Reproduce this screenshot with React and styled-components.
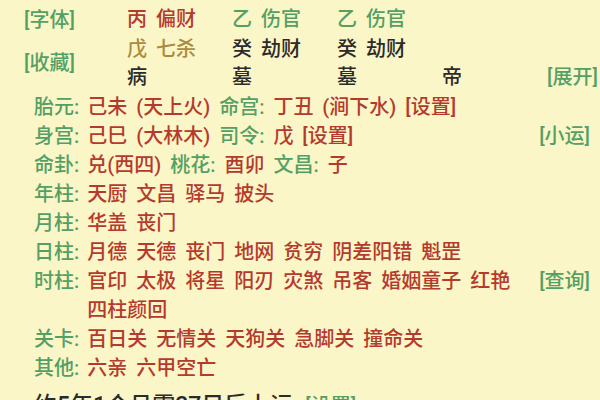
import React from 'react'
import styled, { createGlobalStyle } from 'styled-components';

const GlobalStyle = createGlobalStyle`
    html, body {
        margin: 0;
        padding: 0;
        background: #faf6c7;
    }
    body {
        font-family: Roboto, "Noto Sans CJK SC", sans-serif;
        font-size: 20px;
        font-weight: 500;
        word-spacing: 4px;
    }
`;

const colors = {
    green: '#54a064',
    red: '#b53a2e',
    gold: '#ad8a3c',
    black: '#2b2b2b',
};

const pillars = [
    { stem: ['丙', '偏财', 'red'], branch: ['戊', '七杀', 'gold'], stage: '病' },
    { stem: ['乙', '伤官', 'green'], branch: ['癸', '劫财', 'black'], stage: '墓' },
    { stem: ['乙', '伤官', 'green'], branch: ['癸', '劫财', 'black'], stage: '墓' },
    { stem: null, branch: null, stage: '帝' },
];

function Terms({ items }) {
    return (
        <Values>
            {items.map((t, i) => (
                <React.Fragment key={i}>
                    <Term>{t}</Term>{i < items.length - 1 && ' '}
                </React.Fragment>
            ))}
        </Values>
    );
}

function App() {
    return (
        <Page>
            <GlobalStyle />
            <TopGrid>
                <Tag style={{ gridColumn: 1, gridRow: 1 }}>[字体]</Tag>
                <Tag style={{ gridColumn: 1, gridRow: '2 / 4' }}>[收藏]</Tag>
                {pillars.map((p, i) => (
                    <React.Fragment key={i}>
                        <Cell style={{ gridColumn: i + 2, gridRow: 1 }} tone={p.stem ? p.stem[2] : 'black'}>
                            {p.stem && `${p.stem[0]} ${p.stem[1]}`}
                        </Cell>
                        <Cell style={{ gridColumn: i + 2, gridRow: 2 }} tone={p.branch ? p.branch[2] : 'black'}>
                            {p.branch && `${p.branch[0]} ${p.branch[1]}`}
                        </Cell>
                        <Cell style={{ gridColumn: i + 2, gridRow: 3 }} tone="black">{p.stage}</Cell>
                    </React.Fragment>
                ))}
                <SideTag style={{ gridColumn: 6, gridRow: 3 }}>[展开]</SideTag>
            </TopGrid>

            <Details>
                <Row>
                    <Label>胎元:</Label>
                    <Values>
                        己未 (天上火) <Inline>命宫:</Inline> 丁丑 (涧下水) [设置]
                    </Values>
                </Row>
                <Row>
                    <Label>身宫:</Label>
                    <Values>
                        己巳 (大林木) <Inline>司令:</Inline> 戊 [设置]
                    </Values>
                    <SideTag>[小运]</SideTag>
                </Row>
                <Row>
                    <Label>命卦:</Label>
                    <Values>
                        兑(西四) <Inline>桃花:</Inline> 酉卯 <Inline>文昌:</Inline> 子
                    </Values>
                </Row>
                <Row>
                    <Label>年柱:</Label>
                    <Terms items={['天厨', '文昌', '驿马', '披头']} />
                </Row>
                <Row>
                    <Label>月柱:</Label>
                    <Terms items={['华盖', '丧门']} />
                </Row>
                <Row>
                    <Label>日柱:</Label>
                    <Terms items={['月德', '天德', '丧门', '地网', '贫穷', '阴差阳错', '魁罡']} />
                </Row>
                <Row>
                    <Label>时柱:</Label>
                    <Terms items={['官印', '太极', '将星', '阳刃', '灾煞', '吊客', '婚姻童子', '红艳', '四柱颜回']} />
                    <SideTag>[查询]</SideTag>
                </Row>
                <Row>
                    <Label>关卡:</Label>
                    <Terms items={['百日关', '无情关', '天狗关', '急脚关', '撞命关']} />
                </Row>
                <Row>
                    <Label>其他:</Label>
                    <Terms items={['六亲', '六甲空亡']} />
                </Row>
                <LuckRow>
                    <LuckText>约5年1个月零27日后上运</LuckText> <Inline>[设置]</Inline>
                </LuckRow>
            </Details>
        </Page>
    );
}

export default App;

const Page = styled.div`
    width: 600px;
    height: 400px;
    overflow: hidden;
    background: #faf6c7;
`;

const TopGrid = styled.div`
    display: grid;
    grid-template-columns: 103px repeat(4, 105px) 1fr;
    grid-template-rows: 30px 28px 28px;
    padding: 5px 10px 0 24px;
    line-height: 28px;
`;

const Cell = styled.div`
    color: ${props => colors[props.tone]};
    white-space: nowrap;
`;

const Tag = styled.div`
    color: ${colors.green};
    align-self: center;
    white-space: nowrap;
`;

const SideTag = styled.div`
    color: ${colors.green};
    justify-self: end;
    margin-left: auto;
    white-space: nowrap;
`;

const Details = styled.div`
    padding: 2px 10px 0 34px;
`;

const Row = styled.div`
    display: flex;
    align-items: flex-start;
    line-height: 29px;
`;

const Label = styled.span`
    color: ${colors.green};
    white-space: nowrap;
    margin-right: 8px;
`;

const Values = styled.div`
    color: ${colors.red};
    flex: 1;
    max-width: 450px;
`;

const Term = styled.span`
    white-space: nowrap;
`;

const Inline = styled.span`
    color: ${colors.green};
`;

const LuckRow = styled.div`
    display: flex;
    align-items: baseline;
    gap: 12px;
    line-height: 29px;
    margin-top: 8px;
    white-space: nowrap;
`;

const LuckText = styled.span`
    color: ${colors.black};
    font-size: 23px;
`;
